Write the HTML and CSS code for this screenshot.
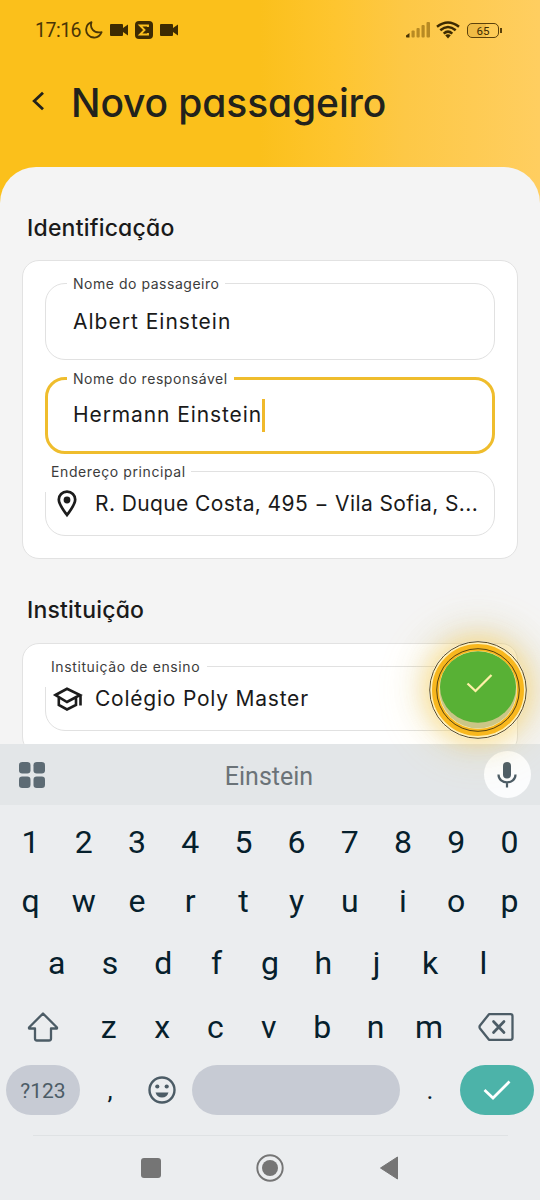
FILE: index.html
```html
<!DOCTYPE html>
<html lang="pt-BR">
<head>
<meta charset="utf-8">
<title>Novo passageiro</title>
<link rel="stylesheet" href="styles.css">
</head>
<body>
<div class="screen">
  <div class="status">
    <span class="clock">17:16</span>
    <svg class="moon" width="18" height="18" viewBox="0 0 18 18"><path d="M6.500 1.200C4.500 7 8.500 12.500 16.600 11.200C15 15 12 16.800 8.800 16.500C4 16.100 .8 12.500 1.200 8.200C1.500 4.800 3.500 2.200 6.500 1.200Z" fill="none" stroke="#4a3505" stroke-width="1.800" stroke-linejoin="round"/></svg>
    <svg class="cam" width="18" height="12" viewBox="0 0 18 12"><path d="M1 0H12a1 1 0 0 1 1 1V4L18 .5V11.500L13 8V11a1 1 0 0 1-1 1H1a1 1 0 0 1-1-1V1a1 1 0 0 1 1-1Z" fill="#3d2b02"/></svg>
    <svg class="sigma" width="18" height="18" viewBox="0 0 18 18"><rect width="18" height="18" rx="4" fill="#3d2b02"/><path d="M13 6V4.500H5L9.500 9L5 13.500H13V12" fill="none" stroke="#fbc01c" stroke-width="1.900"/></svg>
    <svg class="cam" width="18" height="12" viewBox="0 0 18 12"><path d="M1 0H12a1 1 0 0 1 1 1V4L18 .5V11.500L13 8V11a1 1 0 0 1-1 1H1a1 1 0 0 1-1-1V1a1 1 0 0 1 1-1Z" fill="#3d2b02"/></svg>
    <span class="spacer"></span>
    <svg class="signal" width="25" height="16" viewBox="0 0 25 16"><g fill="#b88a23"><rect x="5.500" y="8.500" width="3.200" height="7" rx="1"/><rect x="10.500" y="6" width="3.200" height="9.500" rx="1"/><rect x="15.500" y="3" width="3.200" height="12.500" rx="1"/><rect x="20.500" y="0" width="3.500" height="15.500" rx="1"/></g><path d="M0 13.500L3.500 11V15.500H.8Q0 15.500 0 14.500Z" fill="#4a3505"/></svg>
    <svg class="wifi" width="24" height="18" viewBox="0 0 24 18"><g fill="none" stroke="#3d2b02" stroke-width="2.500"><path d="M1 5.800Q12-2.800 23 5.800"/><path d="M4.300 9.300Q12 2.800 19.700 9.300"/><path d="M7.700 12.600Q12 8.700 16.300 12.600"/></g><path d="M9.200 14.300Q12 12.200 14.800 14.300L12 17.500Z" fill="#3d2b02"/></svg>
    <span class="battery"><span class="charge">65</span></span>
  </div>
  <header class="header">
    <svg width="14" height="20" viewBox="0 0 14 20"><path d="M12 1.700L3.200 10L12 18.300" fill="none" stroke="#22221c" stroke-width="2.800"/></svg>
    <h1 class="title">Novo passageiro</h1>
  </header>
  <main class="sheet">
    <h2 class="section">Identificação</h2>
    <div class="card">
      <div class="field">
        <label class="label label-passenger">Nome do passageiro</label>
        <span class="value">Albert Einstein</span>
      </div>
      <div class="field field-active">
        <label class="label label-guardian">Nome do responsável</label>
        <span class="value value-guardian">Hermann Einstein</span><span class="caret"></span>
      </div>
      <div class="field field-icon">
        <label class="label label-wide label-address">Endereço principal</label>
        <svg class="lead" width="32" height="32" viewBox="0 0 32 32"><path d="M16 3.700C11.200 3.700 7.800 7.100 7.800 11.600C7.800 16.600 11.800 21.300 16 27C20.200 21.300 24.200 16.600 24.200 11.600C24.200 7.100 20.800 3.700 16 3.700Z" fill="none" stroke="#1c1c1c" stroke-width="2.700"/><circle cx="16" cy="12" r="3.400" fill="#1c1c1c"/></svg>
        <span class="value value-address">R. Duque Costa, 495 − Vila Sofia, S...</span>
      </div>
    </div>
    <h2 class="section section-school">Instituição</h2>
    <div class="card">
      <div class="field field-icon field-school">
        <label class="label label-wide label-school">Instituição de ensino</label>
        <svg class="lead" width="32" height="32" viewBox="0 0 32 32"><path d="M4.500 12L16 5.800L29 12L16 19Z M7.800 14V22L16 26.500L25 22V14.500M29.500 12V22.500" fill="none" stroke="#1c1c1c" stroke-width="2.600"/></svg>
        <span class="value value-school">Colégio Poly Master</span>
      </div>
    </div>
  </main>
  <section class="keyboard">
    <div class="suggest">
      <svg class="apps" width="26" height="26" viewBox="0 0 26 26" fill="#5d6b74"><rect width="11.500" height="11.500" rx="3.200"/><rect x="14.500" width="11.500" height="11.500" rx="3.200"/><rect y="14.500" width="11.500" height="11.500" rx="3.200"/><rect x="14.500" y="14.500" width="11.500" height="11.500" rx="3.200"/></svg>
      <span class="word">Einstein</span>
      <span class="mic"><svg width="20" height="26" viewBox="0 0 20 26"><rect x="6" y="0" width="8" height="16.500" rx="4" fill="#4c5c66"/><path d="M1.500 12.500C1.500 23 18.500 23 18.500 12.500M10 20.500V25.500" fill="none" stroke="#4c5c66" stroke-width="2.200"/></svg></span>
    </div>
    <div class="keys"><span>1</span><span>2</span><span>3</span><span>4</span><span>5</span><span>6</span><span>7</span><span>8</span><span>9</span><span>0</span></div>
    <div class="keys keys-top"><span>q</span><span>w</span><span>e</span><span>r</span><span>t</span><span>y</span><span>u</span><span>i</span><span>o</span><span>p</span></div>
    <div class="keys keys-home"><span>a</span><span>s</span><span>d</span><span>f</span><span>g</span><span>h</span><span>j</span><span>k</span><span>l</span></div>
    <div class="keys keys-low">
      <span><svg width="32" height="30" viewBox="0 0 32 30"><path d="M16 1.500L30 15.500V16.500H24V26.500Q24 28.500 22 28.500H10Q8 28.500 8 26.500V16.500H2V15.500Z" fill="none" stroke="#4c5c66" stroke-width="2.300" stroke-linejoin="round"/></svg></span>
      <span>z</span><span>x</span><span>c</span><span>v</span><span>b</span><span>n</span><span>m</span>
      <span><svg width="36" height="28" viewBox="0 0 36 28"><path d="M11 1.200H32.500Q34.500 1.200 34.500 3.200V24.800Q34.500 26.800 32.500 26.800H11L2 15.500Q1 14 2 12.500Z" fill="none" stroke="#4c5c66" stroke-width="2.300" stroke-linejoin="round"/><path d="M15.500 8.500L26 19.500M26 8.500L15.500 19.500" stroke="#4c5c66" stroke-width="2.700" stroke-linecap="round"/></svg></span>
    </div>
    <div class="actions">
      <span class="pill">?123</span>
      <span class="punct">,</span>
      <svg class="emoji" width="28" height="28" viewBox="0 0 28 28"><circle cx="14" cy="14" r="12.500" fill="none" stroke="#4c5c66" stroke-width="2.400"/><circle cx="9.300" cy="10.500" r="2.100" fill="#4c5c66"/><circle cx="18.700" cy="10.500" r="2.100" fill="#4c5c66"/><path d="M7.500 16.500H20.500Q19 21.500 14 21.500Q9 21.500 7.500 16.500Z" fill="#4c5c66"/></svg>
      <span class="space"></span>
      <span class="punct">.</span>
      <span class="enter"><svg width="28" height="20" viewBox="0 0 28 20"><path d="M1.500 10L10 18L26.500 1.500" fill="none" stroke="#fff" stroke-width="2.700"/></svg></span>
    </div>
    <nav class="nav">
      <svg width="20" height="20" viewBox="0 0 20 20"><rect width="20" height="20" rx="3" fill="#757575"/></svg>
      <svg width="28" height="28" viewBox="0 0 28 28"><circle cx="14" cy="14" r="12.700" fill="none" stroke="#757575" stroke-width="1.900"/><circle cx="14" cy="14" r="8" fill="#757575"/></svg>
      <svg width="20" height="24" viewBox="0 0 20 24"><path d="M18.500 1V23L1.500 12Z" fill="#757575" stroke="#757575" stroke-linejoin="round"/></svg>
    </nav>
  </section>
  <button class="fab" aria-label="Confirmar">
    <svg width="98" height="98" viewBox="0 0 98 98"><circle cx="49" cy="49" r="48" fill="#fff0b8"/><circle cx="49" cy="49" r="42.500" fill="none" stroke="#f8b71e" stroke-width="7"/><circle cx="49" cy="49" r="38.500" fill="#cbc687"/><ellipse cx="49" cy="46" rx="38" ry="35.800" fill="#58b135"/><g fill="none" stroke="#44350d"><circle cx="49" cy="49" r="48.300" stroke-width=".9"/><circle cx="49" cy="49" r="41.300" stroke-width=".9"/></g><path d="M38.500 42.500L46.500 50L62.500 34" fill="none" stroke="#fff0a8" stroke-width="2.300"/></svg>
  </button>
</div>
</body>
</html>
```

FILE: styles.css
```css
* { box-sizing: border-box; }
body { margin: 0; }
svg { display: block; flex: none; }

.screen {
  position: relative;
  width: 540px;
  height: 1200px;
  overflow: hidden;
  display: flex;
  flex-direction: column;
  background: linear-gradient(90deg, #fbc01b 0%, #fbc01b 48%, #fec52f 62%, #fdc846 75%, #ffce60 100%);
  font-family: Inter, "Open Sans", sans-serif;
  color: #1a1a1a;
}

.status { display: flex; align-items: center; height: 60px; padding: 0 41px 0 35px; flex: none; }
.clock { font: 19.5px/24px Roboto, sans-serif; width: 50px; color: #4a3505; letter-spacing: -.5px; padding-top: 1px; }
.cam { margin-left: 7px; }
.sigma { margin-left: 7px; }
.spacer { flex: 1; }
.wifi { margin-left: 5px; }
.battery {
  position: relative; margin-left: 7px; width: 32px; height: 15px;
  border: 1.500px solid #5b410b; border-radius: 5px;
  background: linear-gradient(90deg, #efbb45 0 60%, transparent 60%);
}
.battery::after { content: ""; position: absolute; right: -4px; top: 4px; width: 2px; height: 5px; background: #5b410b; }
.charge { display: block; text-align: center; font: 400 11.5px/14px Roboto, sans-serif; color: #3d2b02; }

.header { display: flex; align-items: center; height: 107px; padding: 0 31px 26px; flex: none; gap: 26px; }
.title { margin: 5px 0 0; font-size: 39px; line-height: 50px; font-weight: 500; letter-spacing: -.12px; color: #22221c; font-feature-settings: "cv11"; white-space: nowrap; }

.sheet { height: 577px; flex: none; padding: 46px 22px 0; background: #f4f4f4; border-radius: 36px 36px 0 0; overflow: hidden; }
.section { margin: 0 0 17px 5px; font-size: 23px; line-height: 30px; font-weight: 500; letter-spacing: .2px; font-feature-settings: "cv11"; }
.section-school { margin-top: 36px; margin-bottom: 18px; }

.card { border: 1.500px solid #e2e2e2; border-radius: 17px; background: #fff; padding: 22px; }
.field { position: relative; height: 77px; border: 1.500px solid #e1e1e1; border-radius: 20px; display: flex; align-items: center; padding-left: 27px; }
.field-active { margin-top: 17px; border: 3px solid #efbd2d; padding: 0 0 1px 25px; }
.field-icon { height: 65px; margin-top: 17px; padding: 0 0 0 5px; }
.field-school { margin-top: 0; }
.label { position: absolute; top: -10px; left: 21px; padding: 0 6px; height: 20px; background: #fff; font-size: 14px; line-height: 20px; color: #3c3c3c; white-space: nowrap; }
.field-active .label { left: 19px; top: -11px; }
.label-passenger { width: 158px; letter-spacing: .53px; }
.label-guardian { width: 167px; letter-spacing: .55px; }
.label-wide { left: -2px; height: 30px; padding-left: 7px; }
.label-address { width: 147px; letter-spacing: .6px; }
.label-school { width: 163px; letter-spacing: .6px; }
.lead { position: relative; }
.value { font-size: 21px; line-height: 28px; letter-spacing: 1px; white-space: nowrap; }
.value-guardian { letter-spacing: .9px; }
.field-icon .value { margin-left: 12px; }
.value-address.value { letter-spacing: .4px; }
.value-school.value { letter-spacing: .77px; }
.caret { width: 3px; height: 33px; background: #f0b92b; }

.keyboard { flex: none; height: 456px; background: #ebedef; color: #06202c; font-family: Roboto, sans-serif; }
.suggest { display: flex; align-items: center; justify-content: space-between; height: 61px; padding: 0 9px 0 19px; background: #e3e6e8; }
.word { margin-left: 9px; padding-top: 3px; font-size: 25px; color: #6b7378; }
.mic { width: 47px; height: 47px; border-radius: 50%; background: #fbfcfd; display: grid; place-items: center; }
.keys { display: grid; grid-template-columns: repeat(10, 1fr); padding: 0 4px; height: 60px; margin-top: 7px; font-size: 32px; line-height: 38px; }
.keys span { display: grid; place-items: center; }
.keys-top { height: 57px; margin: 0; }
.keys-home { height: 68px; margin: 0; grid-template-columns: repeat(9, 1fr); padding: 0 30px; }
.keys-low { height: 59px; margin: 0; grid-template-columns: 78px repeat(7, 53.400px) 80px; }
.actions { display: flex; align-items: center; height: 68px; padding: 0 6px; }
.pill { width: 74px; height: 50px; border-radius: 25px; background: #c7cbd4; color: #4c5c66; display: grid; place-items: center; font-size: 21px; font-weight: 450; padding-top: 2px; }
.punct { width: 60px; text-align: center; font-size: 26px; line-height: 34px; }
.emoji { margin: 0 16px 0 8px; }
.space { width: 208px; height: 50px; border-radius: 25px; background: #c7cbd4; }
.enter { width: 74px; height: 50px; border-radius: 25px; background: #4cb3a9; display: grid; place-items: center; }
.nav { display: flex; align-items: center; justify-content: space-between; margin: 11px 32px 0 33px; padding: 0 109px 0 108px; height: 64px; border-top: 1px solid #dfe2e4; }

/* Floating confirm button over the form and keyboard */
.fab { position: absolute; left: 429px; top: 641px; width: 98px; height: 98px; padding: 0; border: 0; border-radius: 50%; background: none; box-shadow: 0 0 20px 4px rgba(255, 208, 75, .42), 0 0 38px 14px rgba(255, 215, 100, .23), 0 -6px 30px 14px rgba(100, 110, 120, .07); }
```
